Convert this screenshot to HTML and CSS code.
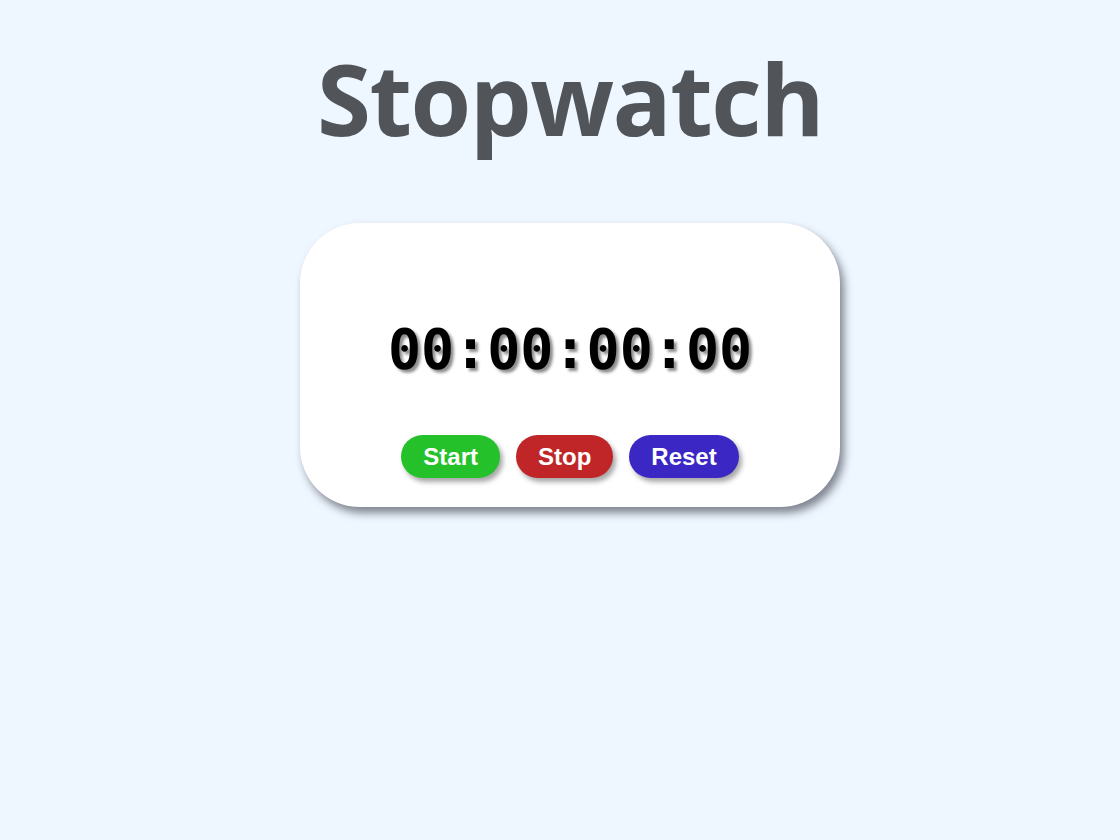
FILE: index.html
```html
<!DOCTYPE html>
<html lang="en">
<head>
<meta charset="utf-8">
<title>Stopwatch</title>
<link rel="stylesheet" href="styles.css">
</head>
<body>
<main class="page">
  <h1 class="title">Stopwatch</h1>
  <section class="card">
    <div class="display">00:00:00:00</div>
    <div class="controls">
      <button class="btn btn-start">Start</button>
      <button class="btn btn-stop">Stop</button>
      <button class="btn btn-reset">Reset</button>
    </div>
  </section>
</main>
</body>
</html>
```
FILE: styles.css
```css
html, body {
  margin: 0;
  padding: 0;
  background: #eef6ff;
  height: 100%;
}
.page {
  display: flex;
  flex-direction: column;
  align-items: center;
  padding-left: 20px;
}
.title {
  margin: 38px 0 0 0;
  font-family: "Open Sans", sans-serif;
  font-weight: 700;
  font-size: 98px;
  line-height: 120px;
  letter-spacing: -1.5px;
  color: #515559;
}
.card {
  margin-top: 65px;
  width: 540px;
  height: 284px;
  box-sizing: border-box;
  background: #ffffff;
  border-radius: 60px;
  box-shadow: 4px 6px 8px rgba(90, 95, 105, 0.75);
  display: flex;
  flex-direction: column;
  align-items: center;
  padding-top: 94px;
}
.display {
  font-family: "DejaVu Sans Mono", monospace;
  font-weight: 700;
  font-size: 55px;
  line-height: 64px;
  color: #000;
  font-variant-numeric: slashed-zero;
  text-shadow: 3px 3px 3px rgba(0, 0, 0, 0.45);
}
.controls {
  margin-top: 54px;
  display: flex;
  gap: 16px;
}
.btn {
  border: none;
  height: 43px;
  padding: 0 22px;
  border-radius: 22px;
  color: #fff;
  font-family: "Liberation Sans", Arial, sans-serif;
  font-weight: 700;
  font-size: 24px;
  box-shadow: 3px 4px 5px rgba(0, 0, 0, 0.35);
}
.btn-start { background: #24c12a; }
.btn-stop { background: #c02627; }
.btn-reset { background: #3a27c4; }
```
